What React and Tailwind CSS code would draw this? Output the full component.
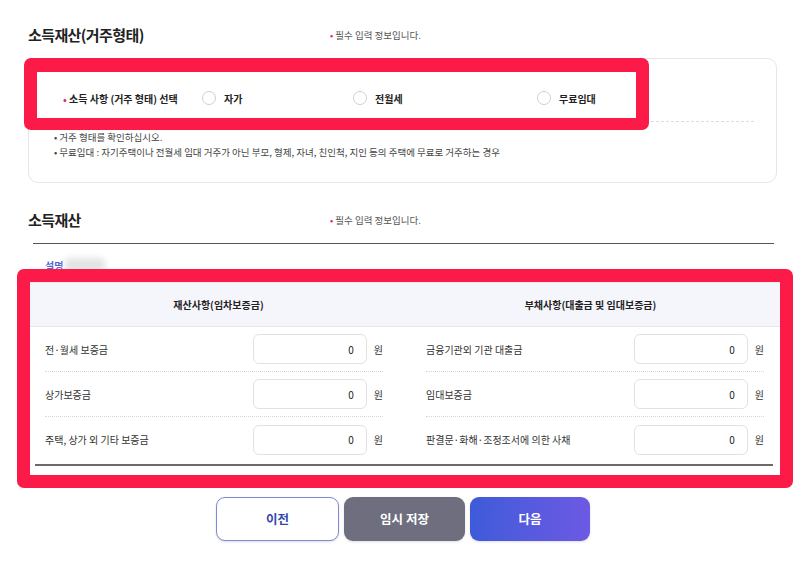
import React from 'react';

const font = { fontFamily: '"Noto Sans CJK KR", "Noto Sans", sans-serif' };

function Radio({ label }) {
  return <label className="flex items-center gap-[8px]">
      <span className="w-[14px] h-[14px] rounded-full border border-[#cfcfcf] bg-white" />
      <span className="text-[10px] font-bold text-[#222]">{label}</span>
    </label>;
}

function MoneyRow({ label, last }) {
  return <div className={`flex items-center h-[45px] ${last ? '' : 'border-b border-dotted border-[#d6d6d6]'}`}>
      <span className="flex-1 text-[10px] text-[#333]">{label}</span>
      <div className="w-[114px] h-[30px] rounded-[6px] border border-[#e2e2e2] flex items-center justify-end pr-[12px] text-[10px] text-[#222]">0</div>
      <span className="ml-[7px] text-[10px] text-[#333]">원</span>
    </div>;
}

export default function App() {
  const assets = ['전·월세 보증금', '상가보증금', '주택, 상가 외 기타 보증금'];
  const debts = ['금융기관외 기관 대출금', '임대보증금', '판결문·화해·조정조서에 의한 사채'];
  return <div style={font} className="relative w-[800px] h-[565px] bg-white overflow-hidden">
      <div className="pl-[28px] pr-[23px] pt-[24px]">
        {/* 소득재산(거주형태) */}
        <div className="flex items-center h-[22px]">
          <h2 className="w-[302px] text-[15px] font-semibold tracking-[-0.6px] text-[#222]">소득재산(거주형태)</h2>
          <p className="text-[9.5px] text-[#555]"><span className="text-[#e0304e]">•</span> 필수 입력 정보입니다.</p>
        </div>
        <div className="mt-[12px] h-[125px] rounded-[10px] border border-[#e6e6e6] pt-[30px] px-[22px]">
          <div className="flex items-center h-[18px] pl-[12px]">
            <span className="w-[139px] text-[10px] font-bold text-[#222]"><span className="text-[#e0304e]">•</span> 소득 사항 (거주 형태) 선택</span>
            <div className="w-[151px]"><Radio label="자가" /></div>
            <div className="w-[184px]"><Radio label="전월세" /></div>
            <Radio label="무료임대" />
          </div>
          <div className="mt-[14px] border-t border-dashed border-[#dcdcdc]" />
          <ul className="mt-[8px] pl-[3px] text-[9.5px] leading-[15px] text-[#444]">
            <li>• 거주 형태를 확인하십시오.</li>
            <li>• 무료임대 : 자기주택이나 전월세 임대 거주가 아닌 부모, 형제, 자녀, 친인척, 지인 등의 주택에 무료로 거주하는 경우</li>
          </ul>
        </div>

        {/* 소득재산 */}
        <div className="flex items-center h-[22px] mt-[26px]">
          <h2 className="w-[302px] text-[15px] font-semibold tracking-[-0.6px] text-[#222]">소득재산</h2>
          <p className="text-[9.5px] text-[#555]"><span className="text-[#e0304e]">•</span> 필수 입력 정보입니다.</p>
        </div>
        <div className="ml-[5px] mr-[3px] mt-[12px] border-t border-[#555]" />
        <div className="flex items-center ml-[17px] mt-[13px] h-[16px]">
          <span className="text-[10px] font-semibold text-[#5561d6]">설명</span>
          <span className="ml-[2px] w-[40px] h-[14px] rounded bg-[#e3e3e3] blur-[3px]" />
        </div>
      </div>

      <div className="ml-[30px] w-[750px] mt-[8px] border-t-2 border-[#ececec]">
        <div className="grid grid-cols-2 h-[44px] bg-[#f5f5fc] border-b border-[#e6e6ee] items-center text-[10px] font-bold text-[#222]">
          <div className="text-center pl-[2px]">재산사항(임차보증금)</div>
          <div className="text-center pr-[4px]">부채사항(대출금 및 임대보증금)</div>
        </div>
        <div className="grid grid-cols-2">
          <div className="pl-[15px] pr-[22px]">
            {assets.map((a, i) => <MoneyRow key={a} label={a} last={i === 2} />)}
          </div>
          <div className="pl-[21px] pr-[16px]">
            {debts.map((d, i) => <MoneyRow key={d} label={d} last={i === 2} />)}
          </div>
        </div>
        <div className="ml-[5px] mr-[7px] mt-[2px] border-t-2 border-[#6a6a6a]" />
      </div>

      <div className="flex justify-center gap-[5px] mt-[31px] pl-[6px]">
        <button className="w-[123px] h-[44px] rounded-[9px] border border-[#7d8ad9] bg-white text-[12.5px] font-bold text-[#3347b0] shadow-sm">이전</button>
        <button className="w-[121px] h-[44px] rounded-[9px] bg-[#6e6e7e] text-[12.5px] font-bold text-white shadow-sm">임시 저장</button>
        <button className="w-[120px] h-[44px] rounded-[9px] bg-gradient-to-r from-[#3d5bd9] to-[#6c59e4] text-[12.5px] font-bold text-white shadow-sm">다음</button>
      </div>

      {/* annotation highlights */}
      <div className="absolute left-[24px] top-[58px] w-[625px] h-[72px] rounded-[7px] border-[#fc1a49] border-x-[13px] border-t-[14px] border-b-[12px] pointer-events-none" />
      <div className="absolute left-[17px] top-[269px] w-[776px] h-[219px] rounded-[7px] border-[13px] border-[#fc1a49] pointer-events-none" />
    </div>;
}
